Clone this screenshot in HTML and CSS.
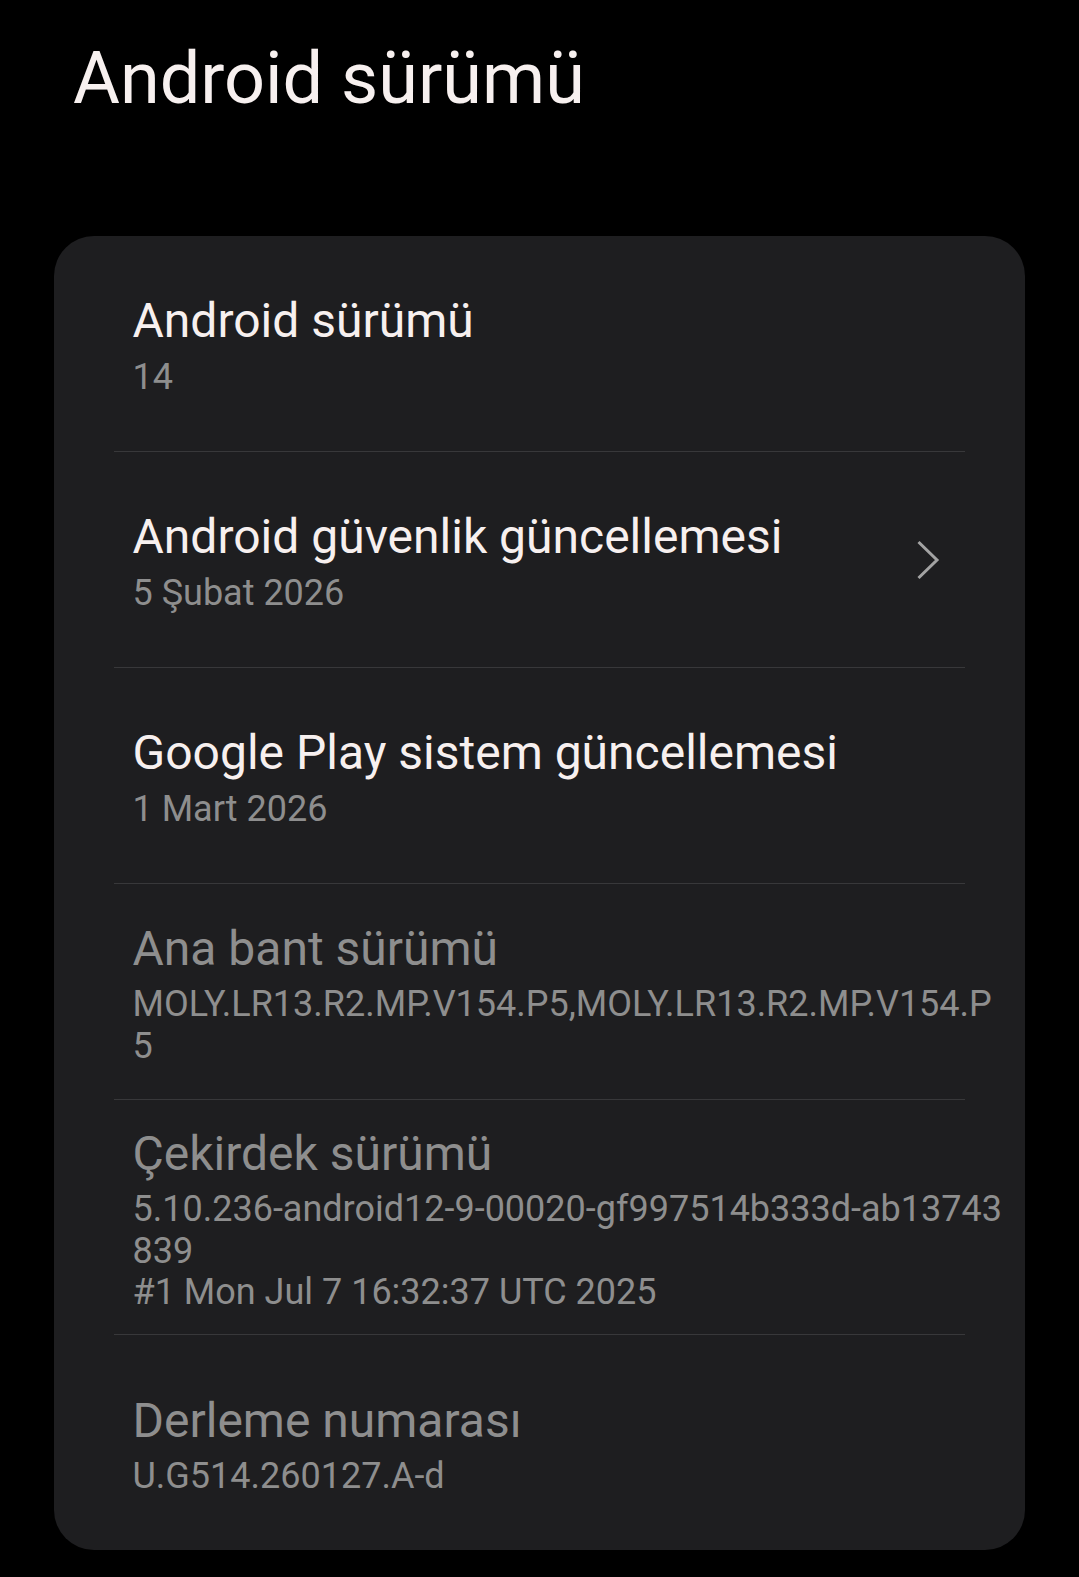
FILE: index.html
```html
<!DOCTYPE html>
<html lang="tr">
<head>
    <meta charset="UTF-8">
    <meta name="viewport" content="width=device-width, initial-scale=1.0">
    <title>Android sürümü</title>
    <link rel="stylesheet" href="styles.css">
</head>
<body>
    <header class="page-header">
        <h1 class="page-title">Android sürümü</h1>
    </header>

    <main class="card">
        <div class="pref">
            <div class="pref-text">
                <div class="pref-title">Android sürümü</div>
                <div class="pref-summary">14</div>
            </div>
        </div>
        <div class="divider"></div>

        <div class="pref">
            <div class="pref-text">
                <div class="pref-title">Android güvenlik güncellemesi</div>
                <div class="pref-summary">5 Şubat 2026</div>
            </div>
            <svg class="chevron" width="24" height="42" viewBox="0 0 24 42">
                <polyline points="2.5,3 21,21 2.5,39" fill="none" stroke="#a3a3a3" stroke-width="3"/>
            </svg>
        </div>
        <div class="divider"></div>

        <div class="pref">
            <div class="pref-text">
                <div class="pref-title">Google Play sistem güncellemesi</div>
                <div class="pref-summary">1 Mart 2026</div>
            </div>
        </div>
        <div class="divider"></div>

        <div class="pref disabled">
            <div class="pref-text">
                <div class="pref-title">Ana bant sürümü</div>
                <div class="pref-summary">MOLY.LR13.R2.MP.V154.P5,MOLY.LR13.R2.MP.V154.P5</div>
            </div>
        </div>
        <div class="divider"></div>

        <div class="pref disabled">
            <div class="pref-text">
                <div class="pref-title">Çekirdek sürümü</div>
                <div class="pref-summary">5.10.236-android12-9-00020-gf997514b333d-ab13743839<br>#1 Mon Jul 7 16:32:37 UTC 2025</div>
            </div>
        </div>
        <div class="divider"></div>

        <div class="pref disabled">
            <div class="pref-text">
                <div class="pref-title">Derleme numarası</div>
                <div class="pref-summary">U.G514.260127.A-d</div>
            </div>
        </div>
    </main>
</body>
</html>
```

FILE: styles.css
```css
body {
    margin: 0;
    background-color: #000;
    color: #f7f0ef;
    font-family: Roboto, "Noto Sans", sans-serif;
}

.page-header {
    padding: 37px 0 0 73px;
}

.page-title {
    margin: 0;
    font-size: 72px;
    font-weight: 400;
    line-height: 84px;
}

.card {
    margin: 115px 54px 0;
    background-color: #1e1e20;
    border-radius: 40px;
}

.pref {
    display: flex;
    align-items: center;
    box-sizing: border-box;
    min-height: 215px;
    padding: 20.5px 22px 20.5px 78.5px;
}

.pref-text {
    flex: 1;
}

.pref-title {
    font-size: 48px;
    line-height: 66px;
}

.pref-summary {
    margin-top: 2.6px;
    font-size: 36px;
    line-height: 41.6px;
    color: #8e8e8e;
    word-break: break-all;
}

/* greyed out rows */
.disabled .pref-title {
    color: #8e8e8e;
}

.chevron {
    flex-shrink: 0;
    margin-right: 63px;
}

.divider {
    height: 1px;
    margin: 0 60px;
    background-color: #38383a;
}
```
